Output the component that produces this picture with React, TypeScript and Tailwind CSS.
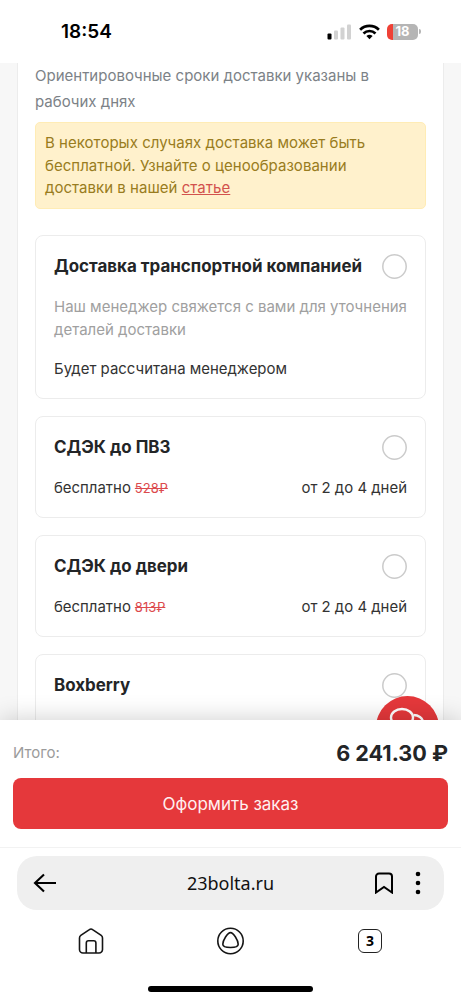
type DeliveryOption = {
  title: string;
  note?: string;
  price?: string;
  oldPrice?: string;
  period?: string;
};

const options: DeliveryOption[] = [
  {
    title: 'Доставка транспортной компанией',
    note: 'Наш менеджер свяжется с вами для уточнения деталей доставки',
    price: 'Будет рассчитана менеджером',
  },
  { title: 'СДЭК до ПВЗ', price: 'бесплатно', oldPrice: '528₽', period: 'от 2 до 4 дней' },
  { title: 'СДЭК до двери', price: 'бесплатно', oldPrice: '813₽', period: 'от 2 до 4 дней' },
  { title: 'Boxberry' },
];

function StatusBar() {
  return (
    <header className="flex h-[63px] shrink-0 items-center justify-between bg-white pl-[61px] pr-[40px]">
      <span className="text-[19px] leading-none font-semibold text-black">18:54</span>
      <div className="flex items-center">
        <svg width="25" height="16" viewBox="0 0 25 16">
          <rect x="0.5" y="9.5" width="4" height="6" rx="1" fill="#000" />
          <rect x="7" y="6.5" width="4" height="9" rx="1" fill="#d2d2d2" />
          <rect x="13.5" y="3.5" width="4" height="12" rx="1" fill="#d2d2d2" />
          <rect x="20" y="0.5" width="4" height="15" rx="1" fill="#d2d2d2" />
        </svg>
        <svg className="ml-[7px]" width="21" height="16" viewBox="0 0 21 16" fill="none" stroke="#000" strokeWidth="2.7">
          <path d="M1.1 5.7a13.6 13.6 0 0 1 18.8 0" />
          <path d="M4.5 9.4a8.7 8.7 0 0 1 12 0" />
          <path d="M7.4 12.1a4.6 4.6 0 0 1 6.2 0L10.5 15.3Z" fill="#000" stroke="none" />
        </svg>
        <div className="ml-[7px] flex h-4 w-[31px] items-center justify-center overflow-hidden rounded-[5px] bg-[linear-gradient(to_right,#ef4136_6px,#b5b5b5_6px)] text-[13px] leading-none font-bold text-white">
          18
        </div>
        <div className="ml-px h-[5px] w-[2px] rounded-r-full bg-[#b5b5b5]" />
      </div>
    </header>
  );
}

function OptionCard({ option }: { option: DeliveryOption }) {
  return (
    <label className="block min-h-[102px] rounded-lg border border-[#ececec] px-[18px] pt-[17px] pb-[17px]">
      <div className="flex h-[26px] items-center justify-between">
        <span className="pt-[2px] text-[16.95px] font-bold text-[#232527]">{option.title}</span>
        <svg className="shrink-0" width="25" height="25" viewBox="0 0 25 25" fill="none">
          <circle cx="12.5" cy="12.5" r="11.7" stroke="#cbcbcb" strokeWidth="1.5" />
        </svg>
      </div>
      {option.note && (
        <p className="mt-[17px] -mr-1 text-[15px] leading-[22.5px] text-[#a0a0a0]">{option.note}</p>
      )}
      {option.price && (
        <div className="mt-[17px] flex h-[23px] items-center justify-between text-[14.95px] text-[#333]">
          <span>
            {option.price}
            {option.oldPrice && <s className="ml-[4px] text-[13px] text-[#dc4a4d]">{option.oldPrice}</s>}
          </span>
          {option.period && <span>{option.period}</span>}
        </div>
      )}
    </label>
  );
}

function BrowserBar() {
  return (
    <footer className="h-[153px] shrink-0 border-t border-[#f2f2f2] bg-white pt-[8px]">
      <div className="mx-[17px] flex h-[54px] items-center rounded-[20px] bg-[#efefef] pr-[23px] pl-[16px]">
        <svg width="24" height="20" viewBox="0 0 24 20" fill="none" stroke="#000" strokeWidth="2.1">
          <path d="M11 1.5 2 10l9 8.5M2 10h21" />
        </svg>
        <span className="ml-[30px] flex-1 text-center font-['Noto_Sans'] text-[18px] text-[#111]">23bolta.ru</span>
        <svg width="20" height="22" viewBox="0 0 20 22" fill="none" stroke="#000" strokeWidth="2">
          <path d="M2 20.5V4.5a3 3 0 0 1 3-3h10a3 3 0 0 1 3 3v16l-8-5.5Z" />
        </svg>
        <svg className="ml-[21px]" width="6" height="24" viewBox="0 0 6 24">
          <circle cx="3" cy="3" r="2.3" />
          <circle cx="3" cy="12" r="2.3" />
          <circle cx="3" cy="21" r="2.3" />
        </svg>
      </div>
      <nav className="flex items-center justify-between px-[77px] pt-[17px]">
        <svg width="28" height="28" viewBox="0 0 28 28" fill="none" stroke="#151515" strokeWidth="1.6">
          <path d="M3.8 8.4 12.4 2.6Q14 1.4 15.6 2.6L24.2 8.4Q25.5 9.4 25.5 11V22.5a3.5 3.5 0 0 1-3.5 3.5H6a3.5 3.5 0 0 1-3.5-3.5V11Q2.5 9.4 3.8 8.400Z" />
          <path d="M9.3 26V16a2.200 2.200 0 0 1 2.200-2.200h5.200a2.200 2.200 0 0 1 2.200 2.200v10" />
        </svg>
        <svg width="28" height="28" viewBox="0 0 28 28" fill="none" stroke="#151515" strokeWidth="1.6">
          <circle cx="13.5" cy="14" r="12.700" />
          <path d="M13.500 5.600C10.500 5.600 5.800 13.500 5.800 17.200c0 2.800 3.500 3.300 7.700 3.300s7.700-.5 7.700-3.300C21.200 13.500 16.500 5.600 13.500 5.600Z" />
        </svg>
        <div className="mx-[2px] flex size-6 items-center justify-center rounded-md border-[1.5px] border-[#222] font-['Noto_Sans'] text-[14px] leading-none font-bold text-black">
          3
        </div>
      </nav>
      <div className="mx-auto mt-[31px] h-[6px] w-[165px] rounded-full bg-black" />
    </footer>
  );
}

export default function App() {
  return (
    <div className="flex h-[1000px] w-full flex-col overflow-hidden bg-white font-['Inter','Noto_Sans',sans-serif]">
      <StatusBar />
      <main className="relative h-[657px] shrink-0 overflow-hidden bg-[#f7f7f7] pr-[17px] pl-[17px]">
        <section className="h-[700px] border-x border-[#ececec] bg-white px-[17px]">
          <p className="text-[15px] leading-[26px] text-[#7c8287]">
            Ориентировочные сроки доставки указаны в рабочих днях
          </p>
          <div className="mt-[7px] h-[87px] rounded-[5px] border border-[#ffecb5] bg-[#fff1cc] px-[9px] pt-[9px] text-[15px] leading-[22.5px] tracking-[0.03px] text-[#997c20]">
            В некоторых случаях доставка может быть бесплатной. Узнайте о ценообразовании доставки в нашей{' '}
            <a href="#" className="text-[#d2524d] underline">статье</a>
          </div>
          <div className="mt-[26px] flex flex-col gap-[17px]">
            {options.map(option => (
              <OptionCard key={option.title} option={option} />
            ))}
          </div>
        </section>

        {/* Chat widget */}
        <svg className="absolute top-[633px] left-[376px]" width="63" height="63" viewBox="0 0 63 63" fill="none">
          <circle cx="31.5" cy="31.5" r="31.5" fill="#e5383b" />
          <g stroke="#fff" strokeWidth="2.4">
            <path d="M37.500 19c5 0 9 3 9.500 7" />
            <ellipse cx="26" cy="21.500" rx="11" ry="8.500" />
          </g>
        </svg>
      </main>

      <div className="relative h-[127px] shrink-0 bg-white px-[13px] pt-[20px] shadow-[0_0_24px_rgba(0,0,0,0.2)]">
        <div className="flex h-[26px] items-center justify-between">
          <span className="text-[15px] text-[#9b9b9b]">Итого:</span>
          <span className="text-[21.6px] font-bold text-[#232527]">6 241.30 ₽</span>
        </div>
        <button className="mt-[12px] h-[51px] w-full rounded-lg bg-[#e5383b] pt-[2px] text-[17px] text-[#fff0f0]">
          Оформить заказ
        </button>
      </div>
      <div className="relative">
        <BrowserBar />
      </div>
    </div>
  );
}
